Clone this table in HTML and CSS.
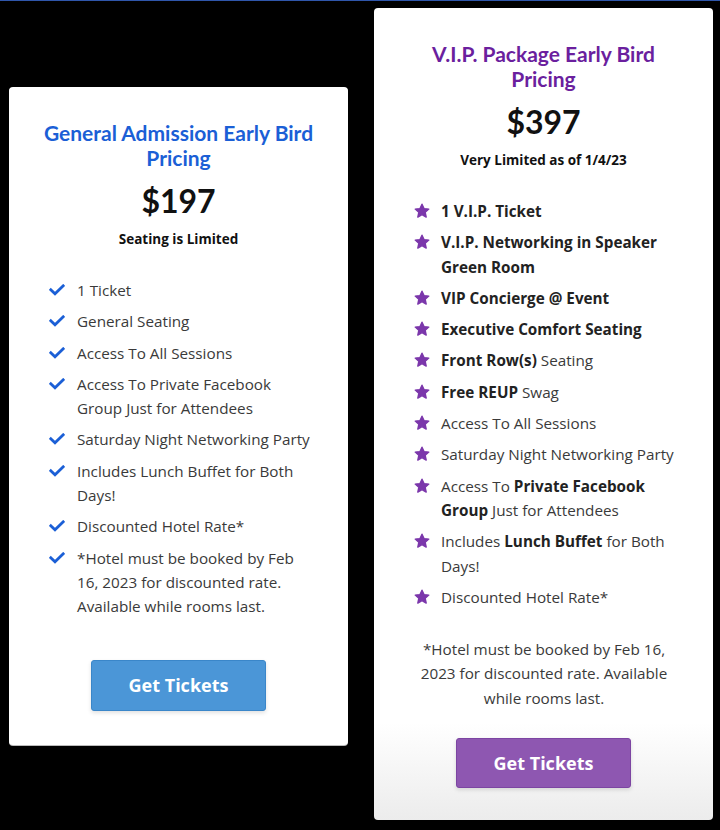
FILE: index.html
```html
<!DOCTYPE html>
<html>
<head>
<meta charset="utf-8">
<link rel="stylesheet" href="styles.css">
</head>
<body>
<div class="topline"></div>
<div class="page">
  <div class="card ga">
    <h2 class="title blue">General Admission Early Bird Pricing</h2>
    <div class="price">$197</div>
    <div class="note">Seating is Limited</div>
    <ul class="list">
      <li><svg class="ico" viewBox="0 0 16 12"><polyline points="1.8,5.8 6,9.8 14.2,1.8"/></svg><span>1 Ticket</span></li>
      <li><svg class="ico" viewBox="0 0 16 12"><polyline points="1.8,5.8 6,9.8 14.2,1.8"/></svg><span>General Seating</span></li>
      <li><svg class="ico" viewBox="0 0 16 12"><polyline points="1.8,5.8 6,9.8 14.2,1.8"/></svg><span>Access To All Sessions</span></li>
      <li><svg class="ico" viewBox="0 0 16 12"><polyline points="1.8,5.8 6,9.8 14.2,1.8"/></svg><span>Access To Private Facebook Group Just for Attendees</span></li>
      <li><svg class="ico" viewBox="0 0 16 12"><polyline points="1.8,5.8 6,9.8 14.2,1.8"/></svg><span>Saturday Night Networking Party</span></li>
      <li><svg class="ico" viewBox="0 0 16 12"><polyline points="1.8,5.8 6,9.8 14.2,1.8"/></svg><span>Includes Lunch Buffet for Both Days!</span></li>
      <li><svg class="ico" viewBox="0 0 16 12"><polyline points="1.8,5.8 6,9.8 14.2,1.8"/></svg><span>Discounted Hotel Rate*</span></li>
      <li><svg class="ico" viewBox="0 0 16 12"><polyline points="1.8,5.8 6,9.8 14.2,1.8"/></svg><span>*Hotel must be booked by Feb 16, 2023 for discounted rate. Available while rooms last.</span></li>
    </ul>
    <div class="btnrow"><a class="btn btn-blue">Get Tickets</a></div>
  </div>

  <div class="card vip">
    <h2 class="title purple">V.I.P. Package Early Bird Pricing</h2>
    <div class="price">$397</div>
    <div class="note">Very Limited as of 1/4/23</div>
    <ul class="list stars">
      <li><svg class="star" viewBox="0 0 16 16"><polygon points="8,1.2 10,5.6 14.8,6.1 11.2,9.3 12.2,14.1 8,11.6 3.8,14.1 4.8,9.3 1.2,6.1 6,5.6"/></svg><span class="strong">1 V.I.P. Ticket</span></li>
      <li><svg class="star" viewBox="0 0 16 16"><polygon points="8,1.2 10,5.6 14.8,6.1 11.2,9.3 12.2,14.1 8,11.6 3.8,14.1 4.8,9.3 1.2,6.1 6,5.6"/></svg><span class="strong">V.I.P. Networking in Speaker Green Room</span></li>
      <li><svg class="star" viewBox="0 0 16 16"><polygon points="8,1.2 10,5.6 14.8,6.1 11.2,9.3 12.2,14.1 8,11.6 3.8,14.1 4.8,9.3 1.2,6.1 6,5.6"/></svg><span class="strong">VIP Concierge @ Event</span></li>
      <li><svg class="star" viewBox="0 0 16 16"><polygon points="8,1.2 10,5.6 14.8,6.1 11.2,9.3 12.2,14.1 8,11.6 3.8,14.1 4.8,9.3 1.2,6.1 6,5.6"/></svg><span class="strong">Executive Comfort Seating</span></li>
      <li><svg class="star" viewBox="0 0 16 16"><polygon points="8,1.2 10,5.6 14.8,6.1 11.2,9.3 12.2,14.1 8,11.6 3.8,14.1 4.8,9.3 1.2,6.1 6,5.6"/></svg><span><b>Front Row(s)</b> Seating</span></li>
      <li><svg class="star" viewBox="0 0 16 16"><polygon points="8,1.2 10,5.6 14.8,6.1 11.2,9.3 12.2,14.1 8,11.6 3.8,14.1 4.8,9.3 1.2,6.1 6,5.6"/></svg><span><b>Free REUP</b> Swag</span></li>
      <li><svg class="star" viewBox="0 0 16 16"><polygon points="8,1.2 10,5.6 14.8,6.1 11.2,9.3 12.2,14.1 8,11.6 3.8,14.1 4.8,9.3 1.2,6.1 6,5.6"/></svg><span>Access To All Sessions</span></li>
      <li><svg class="star" viewBox="0 0 16 16"><polygon points="8,1.2 10,5.6 14.8,6.1 11.2,9.3 12.2,14.1 8,11.6 3.8,14.1 4.8,9.3 1.2,6.1 6,5.6"/></svg><span>Saturday Night Networking Party</span></li>
      <li><svg class="star" viewBox="0 0 16 16"><polygon points="8,1.2 10,5.6 14.8,6.1 11.2,9.3 12.2,14.1 8,11.6 3.8,14.1 4.8,9.3 1.2,6.1 6,5.6"/></svg><span>Access To <b>Private Facebook</b> <b>Group</b> <span>Just for Attendees</span></span></li>
      <li><svg class="star" viewBox="0 0 16 16"><polygon points="8,1.2 10,5.6 14.8,6.1 11.2,9.3 12.2,14.1 8,11.6 3.8,14.1 4.8,9.3 1.2,6.1 6,5.6"/></svg><span>Includes <b>Lunch Buffet</b> <span>for Both</span> <span>Days!</span></span></li>
      <li><svg class="star" viewBox="0 0 16 16"><polygon points="8,1.2 10,5.6 14.8,6.1 11.2,9.3 12.2,14.1 8,11.6 3.8,14.1 4.8,9.3 1.2,6.1 6,5.6"/></svg><span>Discounted Hotel Rate*</span></li>
    </ul>
    <p class="fine">*Hotel must be booked by Feb 16, 2023 for discounted rate. Available while rooms last.</p>
    <div class="btnrow"><a class="btn btn-purple">Get Tickets</a></div>
  </div>
</div>
</body>
</html>
```

FILE: styles.css
```css
html, body {
  margin: 0;
  padding: 0;
  background: #000;
}
body {
  font-family: "Open Sans", "Noto Sans", sans-serif;
  width: 720px;
  height: 830px;
  overflow: hidden;
}
.topline {
  height: 1px;
  background: #2f56aa;
}
.page {
  display: flex;
  align-items: flex-start;
  gap: 26px;
  padding: 7px 0 0 9px;
}
.card {
  width: 339px;
  box-sizing: border-box;
  background: #fff;
  border-radius: 4px;
  padding: 33px 33px 34px 40px;
}
.ga {
  margin-top: 79px;
  box-shadow: 0 1px 0 #bbb;
}
.vip {
  padding-bottom: 32px;
  background: linear-gradient(to bottom, #fff 0%, #fff 88%, #ececec 100%);
}
.title {
  margin: 0 -8px 0 -15px;
  text-align: center;
  font-family: "Lato", "Open Sans", sans-serif;
  font-weight: 700;
  font-size: 21px;
  line-height: 25px;
}
.blue { color: #1b5fd6; }
.purple { color: #6b1f9e; }
.price {
  margin: 13px -13px 0 -20px;
  text-align: center;
  font-family: "Lato", "Open Sans", sans-serif;
  font-weight: 700;
  font-size: 32px;
  line-height: 36px;
  color: #111;
}
.note {
  margin: 10px -13px 0 -20px;
  text-align: center;
  font-weight: 700;
  font-size: 13.5px;
  line-height: 20px;
  color: #111;
}
.list {
  list-style: none;
  margin: 29px 0 0 0;
  padding: 0;
}
.list li {
  display: flex;
  align-items: flex-start;
  gap: 12px;
  font-size: 15.25px;
  line-height: 24.3px;
  color: #3a3a3a;
  margin-bottom: 7px;
}
.list li:last-child { margin-bottom: 0; }
.list b,
.list .strong {
  font-weight: 700;
  color: #222;
}
.ico {
  flex: none;
  width: 16px;
  height: 12px;
  margin-top: 6px;
  fill: none;
  stroke: #1b5fd6;
  stroke-width: 2.8;
  stroke-linecap: square;
}
.stars li { gap: 11px; }
.star {
  flex: none;
  width: 16px;
  height: 16px;
  margin-top: 4px;
  fill: #7b37ab;
  stroke: #7b37ab;
  stroke-width: 1.4;
  stroke-linejoin: round;
}
.fine {
  margin: 28px 6px 0 0;
  text-align: center;
  font-size: 15.25px;
  line-height: 24.3px;
  color: #3a3a3a;
}
.btnrow {
  display: flex;
  justify-content: center;
  margin: 41px -13px 0 -20px;
}
.vip .btnrow { margin-top: 28px; }
.btn {
  display: flex;
  align-items: center;
  justify-content: center;
  width: 175px;
  height: 51px;
  box-sizing: border-box;
  border-radius: 3px;
  color: #fff;
  font-weight: 700;
  font-size: 18px;
  box-shadow: 0 2px 4px rgba(0,0,0,0.12);
}
.btn-blue {
  background: #4b96d7;
  border: 1px solid #3a86c9;
}
.btn-purple {
  background: #8e57b1;
  border: 1px solid #7c45a2;
  height: 50px;
}
```
